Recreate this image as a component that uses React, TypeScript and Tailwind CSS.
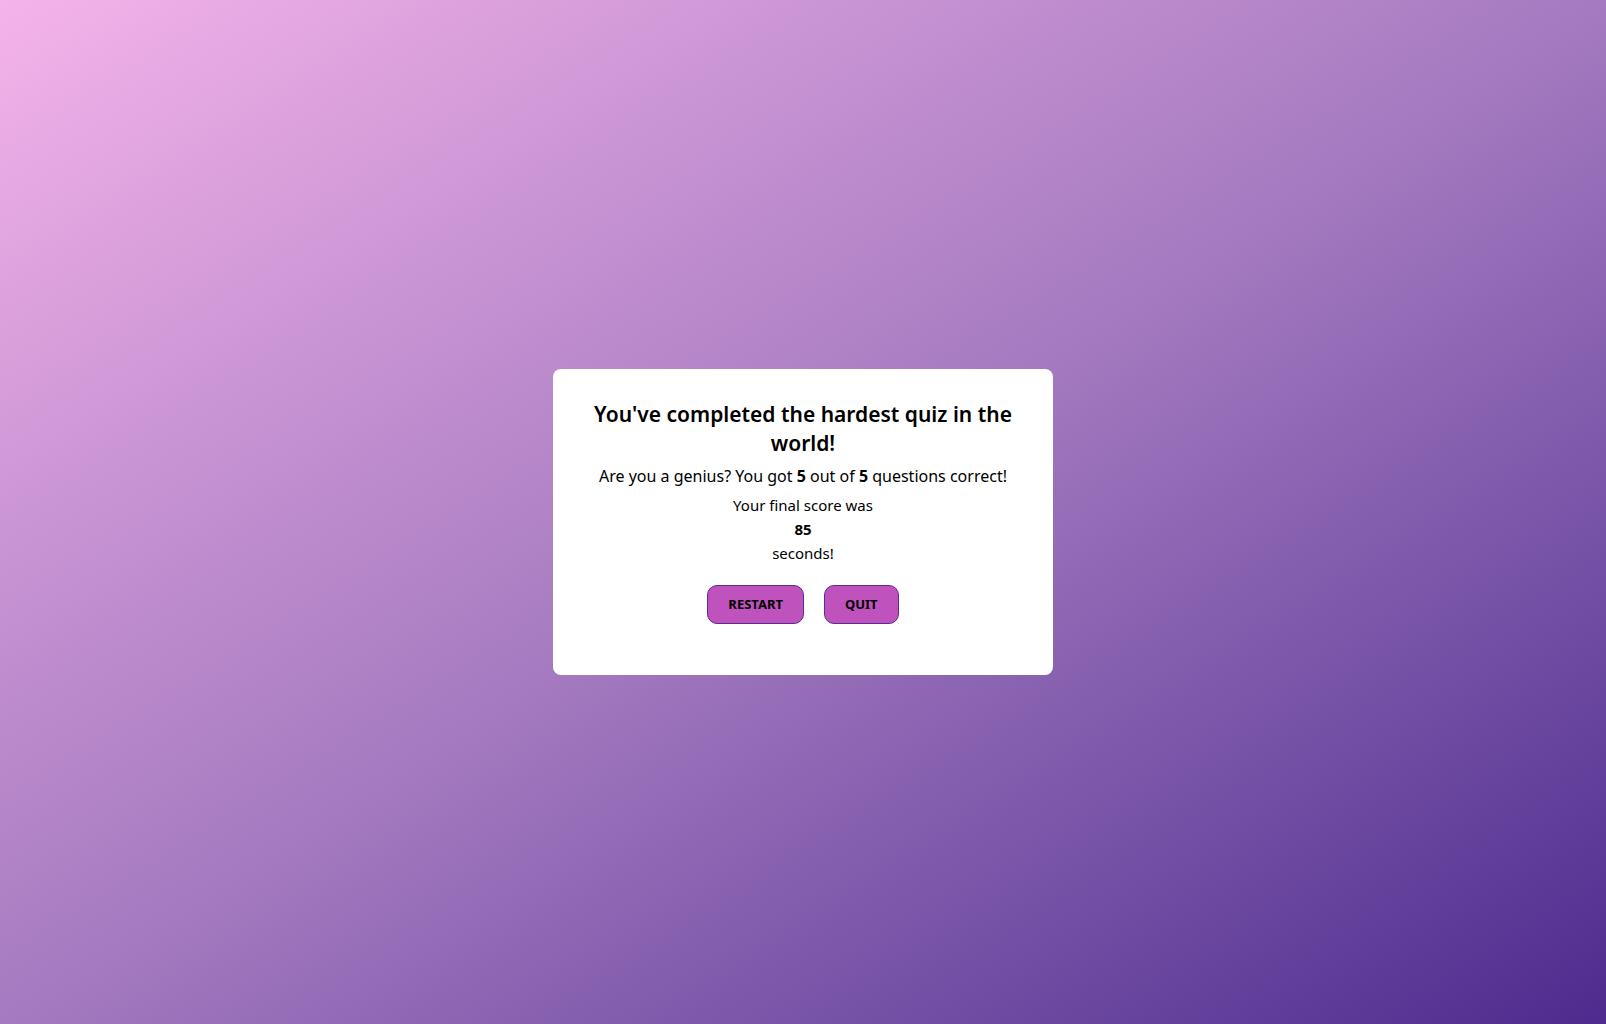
export default function App() {
  return (
    <div
      className="min-h-screen w-full flex items-center justify-center pt-[20px] bg-gradient-to-br from-[#f5b3ea] via-[#a57ac0] to-[#4f2a8e]"
      style={{ fontFamily: '"Noto Sans", "Open Sans", sans-serif' }}
    >
      <div className="w-[500px] h-[306px] bg-white rounded-lg px-[30px] pt-[31px] text-center text-black">
        <h1 className="text-[21px] leading-[29px] font-semibold mx-auto max-w-[430px]">
          You've completed the hardest quiz in the world!
        </h1>
        <p className="mt-[6px] text-[16px] leading-[24px]">
          Are you a genius? You got <b className="font-bold">5</b> out of <b className="font-bold">5</b> questions correct!
        </p>
        <div className="mt-[5px] text-[15px] leading-[24px]">
          <p>Your final score was</p>
          <p className="font-bold">85</p>
          <p>seconds!</p>
        </div>
        <div className="mt-[20px] flex justify-center gap-[20px]">
          <button className="h-[39px] px-[20px] rounded-[10px] border border-[#5b2d90] bg-[#bf52bd] text-[13px] font-bold text-black uppercase">
            Restart
          </button>
          <button className="h-[39px] px-[20px] rounded-[10px] border border-[#5b2d90] bg-[#bf52bd] text-[13px] font-bold text-black uppercase">
            Quit
          </button>
        </div>
      </div>
    </div>
  );
}
